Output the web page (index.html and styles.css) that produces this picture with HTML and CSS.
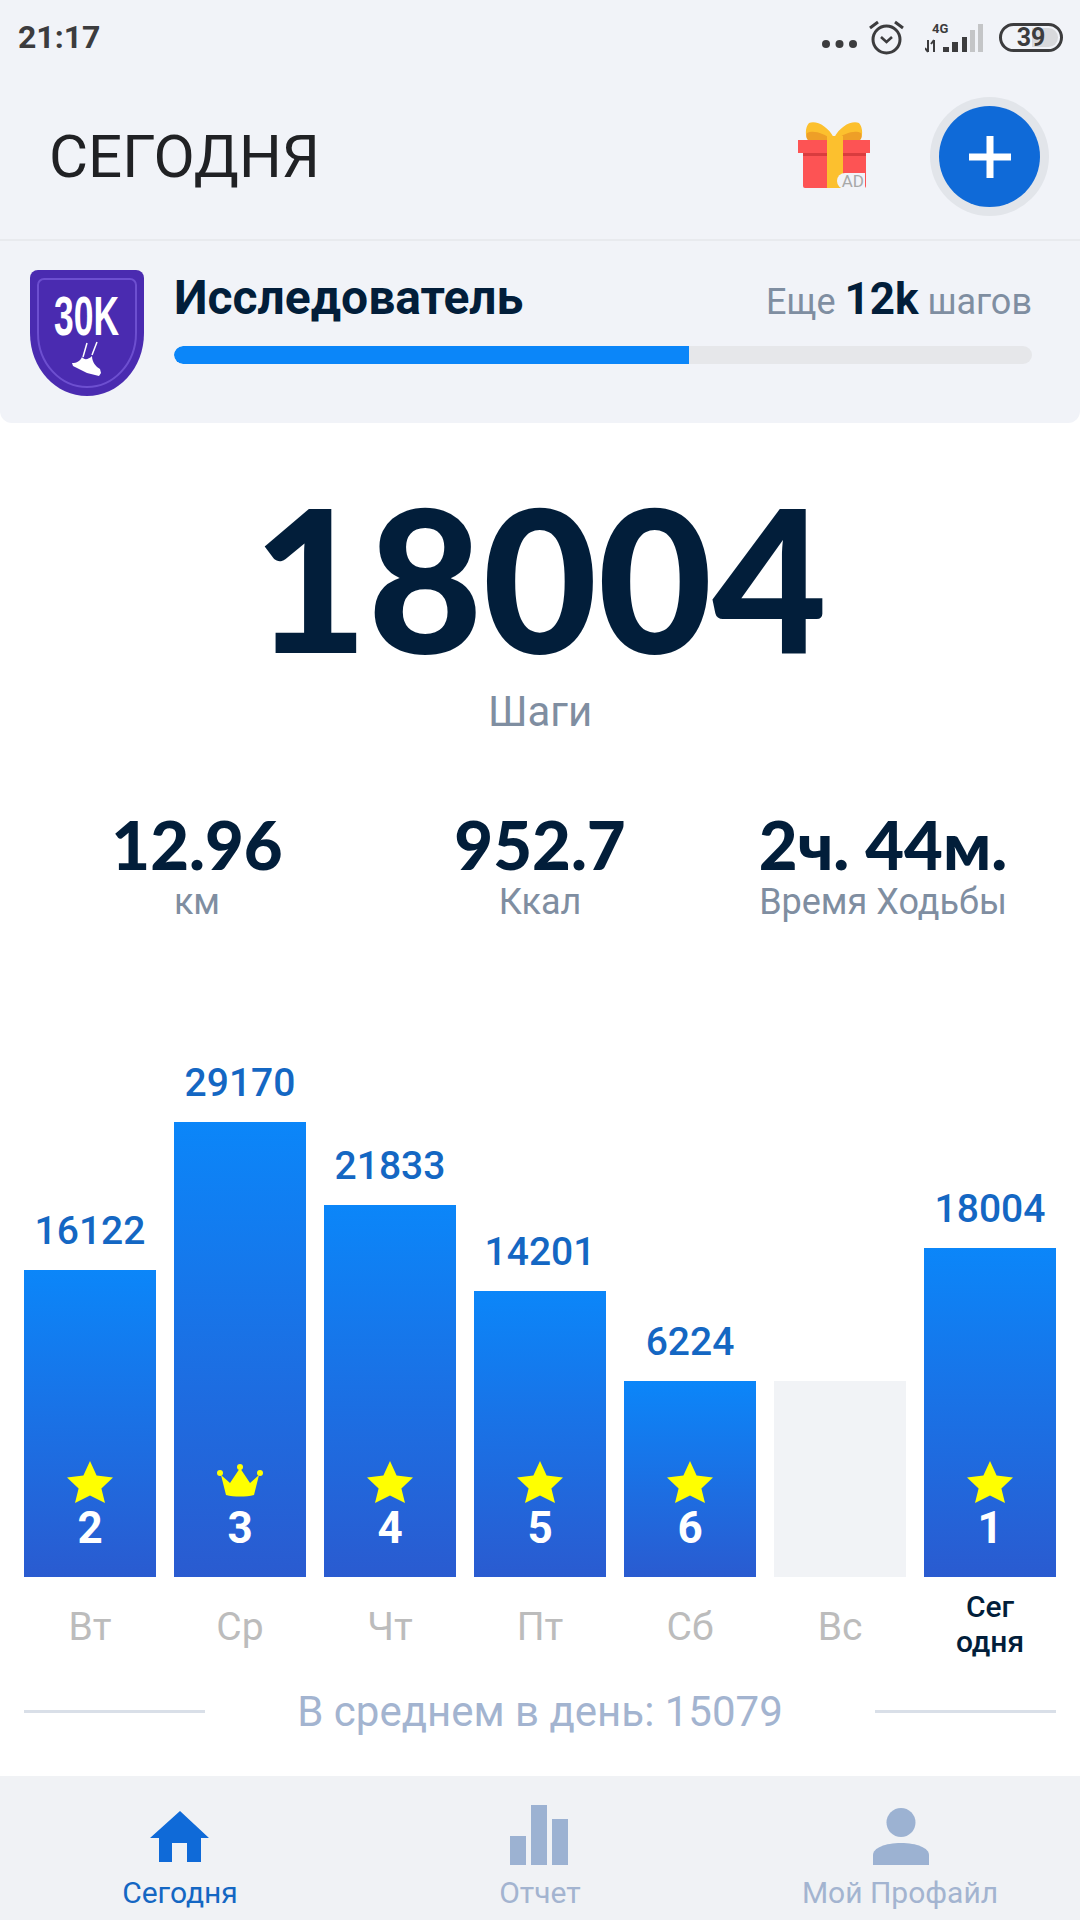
FILE: index.html
```html
<!DOCTYPE html>
<html lang="ru">
<head>
    <meta charset="UTF-8">
    <meta name="viewport" content="width=device-width, initial-scale=1.0">
    <title>Сегодня</title>
    <link rel="stylesheet" href="styles.css">
</head>
<body>
    <div class="screen">
        <!-- Status bar -->
        <div class="status">
            <span class="time">21:17</span>
            <div class="status-icons">
                <svg class="dots" width="35" height="10" viewBox="0 0 35 10"><circle cx="4" cy="5" r="4"/><circle cx="17.5" cy="5" r="4"/><circle cx="31" cy="5" r="4"/></svg>
                <svg class="alarm" width="35" height="35" viewBox="0 0 35 35">
                    <circle cx="17.5" cy="19.5" r="13.5" fill="none" stroke="#3c3c3e" stroke-width="3"/>
                    <path d="M12 17l5.5 5 5.5-5" fill="none" stroke="#3c3c3e" stroke-width="2.6"/>
                    <path d="M1 8l8-6M34 8l-8-6" stroke="#3c3c3e" stroke-width="3" fill="none"/>
                </svg>
                <svg class="signal" width="60" height="32" viewBox="0 0 60 32">
                    <text x="7" y="12" class="net-label">4G</text>
                    <path d="M3 19v12M0 27l3 4M9 31V19M6 23l3-4" stroke="#3c3c3e" stroke-width="2" fill="none"/>
                    <rect x="18" y="26" width="6" height="5" fill="#3c3c3e"/>
                    <rect x="27" y="21" width="6" height="10" fill="#3c3c3e"/>
                    <rect x="37" y="16" width="5" height="15" fill="#3c3c3e"/>
                    <rect x="45" y="9" width="5" height="22" fill="#c4c5c7"/>
                    <rect x="53" y="3" width="5" height="28" fill="#c4c5c7"/>
                </svg>
                <div class="battery"><div class="battery-fill"></div><span>39</span></div>
            </div>
        </div>

        <!-- Title row -->
        <header class="header">
            <h1>СЕГОДНЯ</h1>
            <div class="gift">
                <svg width="72" height="66" viewBox="0 0 72 66">
                    <path d="M36 16C30 4 18-2 11 1 7 6 7 13 10 18h26zM36 16C42 4 54-2 61 1c4 5 4 12 1 17H36z" fill="#fcc02e"/>
                    <path d="M34 18C26 11 15 8 9 11c-1 3-1 5 1 7zM38 18c8-7 19-10 25-7 1 3 1 5-1 7z" fill="#ee9f27"/>
                    <rect x="5" y="31" width="63" height="35" rx="2" fill="#fd5354"/>
                    <rect x="0" y="18" width="72" height="13" fill="#fd5354"/>
                    <rect x="5" y="31" width="63" height="3" fill="#d93c3e"/>
                    <rect x="29" y="14" width="16" height="52" fill="#fcc02e"/>
                </svg>
                <span class="ad">AD</span>
            </div>
            <div class="add-ring">
                <div class="add-btn">
                    <svg width="42" height="42" viewBox="0 0 42 42"><path d="M21 0v42M0 21h42" stroke="#fff" stroke-width="7" fill="none"/></svg>
                </div>
            </div>
        </header>

        <!-- Level progress -->
        <section class="level">
            <svg class="badge" width="114" height="126" viewBox="0 0 114 126">
                <path d="M8 0h98a8 8 0 0 1 8 8v55c0 36-26 63-57 63S0 99 0 63V8a8 8 0 0 1 8-8z" fill="#4a2bb0"/>
                <path d="M14 9h86a6 6 0 0 1 6 6v48c0 31-23 54-49 54S8 94 8 63V15a6 6 0 0 1 6-6z" fill="none" stroke="#6d4fd0" stroke-width="2"/>
                <text x="24" y="65" textLength="65" lengthAdjust="spacingAndGlyphs" class="badge-text">30K</text>
                <path d="M57 73l-4 14M67 72l-5 13" stroke="#fff" stroke-width="1.5" fill="none"/>
                <path d="M52 87C54 90 58 90 62 86 62 92 66 97 70 99L71 103 69 106 57 103 43 96 42 93C47 93 50 91 52 87z" fill="#fff"/>
            </svg>
            <div class="level-body">
                <div class="level-top">
                    <span class="level-name">Исследователь</span>
                    <span class="level-left">Еще <b>12k</b> шагов</span>
                </div>
                <div class="progress"><div class="progress-fill" style="width: 60%"></div></div>
            </div>
        </section>

        <!-- Today's totals -->
        <main class="today">
            <div class="steps">18004</div>
            <div class="steps-label">Шаги</div>

            <div class="stats">
                <div class="stat"><div class="stat-value">12.96</div><div class="stat-label">км</div></div>
                <div class="stat"><div class="stat-value">952.7</div><div class="stat-label">Ккал</div></div>
                <div class="stat"><div class="stat-value">2ч. 44м.</div><div class="stat-label">Время Ходьбы</div></div>
            </div>

            <!-- Weekly chart -->
            <div class="chart">
                <div class="col">
                    <div class="col-value">16122</div>
                    <div class="bar" style="height: 307px">
                        <svg class="star" width="46" height="42" viewBox="0 0 46 42"><path d="M23 0l6.6 14.4L46 16.6 34.4 27.6 38 42 23 34.6 8 42l3.6-14.4L0 16.6l16.4-2.2z"/></svg>
                        <span class="streak">2</span>
                    </div>
                    <div class="day">Вт</div>
                </div>
                <div class="col">
                    <div class="col-value">29170</div>
                    <div class="bar" style="height: 455px">
                        <svg class="star" width="46" height="42" viewBox="0 0 46 42"><circle cx="3" cy="12" r="3"/><circle cx="23" cy="6" r="3"/><circle cx="43" cy="12" r="3"/><path d="M4 14l9 8 10-15 10 15 9-8-5 20c-8 2-20 2-28 0z"/></svg>
                        <span class="streak">3</span>
                    </div>
                    <div class="day">Ср</div>
                </div>
                <div class="col">
                    <div class="col-value">21833</div>
                    <div class="bar" style="height: 372px">
                        <svg class="star" width="46" height="42" viewBox="0 0 46 42"><path d="M23 0l6.6 14.4L46 16.6 34.4 27.6 38 42 23 34.6 8 42l3.6-14.4L0 16.6l16.4-2.2z"/></svg>
                        <span class="streak">4</span>
                    </div>
                    <div class="day">Чт</div>
                </div>
                <div class="col">
                    <div class="col-value">14201</div>
                    <div class="bar" style="height: 286px">
                        <svg class="star" width="46" height="42" viewBox="0 0 46 42"><path d="M23 0l6.6 14.4L46 16.6 34.4 27.6 38 42 23 34.6 8 42l3.6-14.4L0 16.6l16.4-2.2z"/></svg>
                        <span class="streak">5</span>
                    </div>
                    <div class="day">Пт</div>
                </div>
                <div class="col">
                    <div class="col-value">6224</div>
                    <div class="bar" style="height: 196px">
                        <svg class="star" width="46" height="42" viewBox="0 0 46 42"><path d="M23 0l6.6 14.4L46 16.6 34.4 27.6 38 42 23 34.6 8 42l3.6-14.4L0 16.6l16.4-2.2z"/></svg>
                        <span class="streak">6</span>
                    </div>
                    <div class="day">Сб</div>
                </div>
                <div class="col">
                    <div class="bar bar-empty" style="height: 196px"></div>
                    <div class="day">Вс</div>
                </div>
                <div class="col">
                    <div class="col-value">18004</div>
                    <div class="bar" style="height: 329px">
                        <svg class="star" width="46" height="42" viewBox="0 0 46 42"><path d="M23 0l6.6 14.4L46 16.6 34.4 27.6 38 42 23 34.6 8 42l3.6-14.4L0 16.6l16.4-2.2z"/></svg>
                        <span class="streak">1</span>
                    </div>
                    <div class="day day-now">Сег<br>одня</div>
                </div>
            </div>

            <div class="average">
                <span class="rule"></span>
                <span class="average-text">В среднем в день: 15079</span>
                <span class="rule"></span>
            </div>
        </main>

        <!-- Bottom tabs -->
        <nav class="tabs">
            <div class="tab tab-active">
                <svg width="60" height="60" viewBox="0 0 60 60"><path d="M30 6L59 33H51V57H37V38H22V57H9V33H0z" fill="#0f6ad8"/></svg>
                <span>Сегодня</span>
            </div>
            <div class="tab">
                <svg width="60" height="60" viewBox="0 0 60 60" fill="#9cb2d2"><rect x="0" y="31" width="16" height="29"/><rect x="21" y="0" width="16" height="60"/><rect x="42" y="14" width="16" height="46"/></svg>
                <span>Отчет</span>
            </div>
            <div class="tab">
                <svg width="60" height="60" viewBox="0 0 60 60" fill="#9cb2d2"><ellipse cx="31" cy="17.5" rx="14.5" ry="14.5"/><path d="M3 60V50C3 43 15 38 31 38s28 5 28 12v10z"/></svg>
                <span>Мой Профайл</span>
            </div>
        </nav>
    </div>
</body>
</html>
```

FILE: styles.css
```css
* {
    box-sizing: border-box;
}

body {
    margin: 0;
    font-family: Roboto, "Noto Sans", sans-serif;
    background-color: #fff;
}

.screen {
    width: 1080px;
    height: 1920px;
    display: flex;
    flex-direction: column;
    overflow: hidden;
}

/* Status bar */
.status {
    height: 78px;
    padding: 0 17px 4px 18px;
    display: flex;
    align-items: center;
    justify-content: space-between;
    background-color: #f1f3f8;
}

.time {
    font-size: 32px;
    font-weight: 700;
    color: #3c3c3e;
}

.status-icons {
    display: flex;
    align-items: center;
}

.dots {
    fill: #3c3c3e;
    margin: 14px 12px 0 0;
}

.alarm {
    margin-right: 21px;
}

.signal {
    margin-right: 14px;
}

.net-label {
    font-size: 13px;
    font-weight: 700;
    fill: #3c3c3e;
}

.battery {
    position: relative;
    width: 64px;
    height: 29px;
    border: 3px solid #3c3c3e;
    border-radius: 15px;
    display: flex;
    align-items: center;
    justify-content: center;
    overflow: hidden;
}

.battery span {
    position: relative;
    font-size: 25px;
    font-weight: 700;
    color: #3c3c3e;
}

.battery-fill {
    position: absolute;
    top: 2px;
    right: 2px;
    bottom: 2px;
    width: 26px;
    border-radius: 0 10px 10px 0;
    background-color: #d8d9dc;
}

/* Title row */
.header {
    height: 163px;
    padding: 0 31px 4px 49px;
    display: flex;
    align-items: center;
    background-color: #f1f3f8;
    border-bottom: 2px solid #e8eaee;
}

.header h1 {
    flex: 1;
    margin: 0;
    font-size: 60px;
    font-weight: 400;
    color: #202124;
}

.gift {
    position: relative;
    width: 72px;
    height: 66px;
    margin: 0 60px 4px 0;
}

.ad {
    position: absolute;
    right: 5px;
    bottom: -1px;
    padding: 0 1px 0 5px;
    border-radius: 9px 0 0 9px;
    font-size: 17px;
    line-height: 16px;
    color: #a8a8a8;
    background-color: #f1f3f8;
}

.add-ring {
    width: 119px;
    height: 119px;
    border-radius: 50%;
    background-color: #e2e5ea;
    display: flex;
    align-items: center;
    justify-content: center;
}

.add-btn {
    width: 101px;
    height: 101px;
    border-radius: 50%;
    background-color: #0f6ad8;
    display: flex;
    align-items: center;
    justify-content: center;
}

/* Level progress */
.level {
    height: 182px;
    padding: 29px 48px 0 30px;
    display: flex;
    align-items: flex-start;
    background-color: #f1f3f8;
    border-radius: 0 0 12px 12px;
}

.badge {
    flex-shrink: 0;
    margin-right: 30px;
}

.badge-text {
    font-family: "Liberation Sans", sans-serif;
    font-size: 56px;
    font-weight: 700;
    fill: #fff;
}

.level-body {
    flex: 1;
}

.level-top {
    height: 76px;
    display: flex;
    align-items: baseline;
    justify-content: space-between;
}

.level-name {
    font-size: 48px;
    font-weight: 700;
    line-height: 56px;
    color: #021e3a;
}

.level-left {
    font-size: 36px;
    color: #7f8ea1;
}

.level-left b {
    font-size: 44px;
    color: #021e3a;
}

.progress {
    height: 18px;
    border-radius: 9px;
    background-color: #e6e7ea;
    overflow: hidden;
}

.progress-fill {
    height: 100%;
    border-radius: 9px 0 0 9px;
    background-color: #0b86f9;
}

/* Today's totals */
.today {
    flex: 1;
    display: flex;
    flex-direction: column;
    background-color: #fff;
}

.steps {
    margin-top: 59px;
    font-family: Lato, sans-serif;
    font-size: 198px;
    font-weight: 900;
    line-height: 190px;
    text-align: center;
    color: #021e3a;
}

.steps-label {
    margin-top: 17px;
    font-size: 42px;
    line-height: 46px;
    text-align: center;
    color: #7f8ea1;
}

.stats {
    margin-top: 71px;
    display: grid;
    grid-template-columns: repeat(3, 343px);
    justify-content: center;
    justify-items: center;
}

.stat {
    text-align: center;
    white-space: nowrap;
}

.stat-value {
    font-family: Lato, sans-serif;
    font-size: 67px;
    font-weight: 900;
    line-height: 76px;
    color: #021e3a;
}

.stat-label {
    font-size: 36px;
    line-height: 40px;
    color: #7f8ea1;
}

/* Weekly chart */
.chart {
    height: 751px;
    margin-top: 2px;
    padding: 0 24px;
    display: grid;
    grid-template-columns: repeat(7, 132px);
    justify-content: space-between;
    align-items: end;
}

.col {
    display: flex;
    flex-direction: column;
    align-items: stretch;
}

.col-value {
    height: 64px;
    padding-bottom: 14px;
    font-size: 39px;
    font-weight: 500;
    line-height: 50px;
    text-align: center;
    color: #1467c3;
}

.bar {
    display: flex;
    flex-direction: column;
    align-items: center;
    justify-content: flex-end;
    padding-bottom: 24px;
    background: linear-gradient(to bottom, #0b86f9, #2a5bd0 100%);
}

.bar-empty {
    background: #f1f3f6;
}

.star {
    fill: #ffff00;
}

.streak {
    font-size: 44px;
    font-weight: 700;
    line-height: 50px;
    color: #fff;
}

.day {
    height: 98px;
    padding-top: 28px;
    font-size: 39px;
    line-height: 44px;
    text-align: center;
    color: #bcbcbc;
}

.day-now {
    padding-top: 12px;
    font-size: 30px;
    font-weight: 500;
    line-height: 35px;
    color: #021e3a;
}

.average {
    padding: 0 24px;
    height: 60px;
    margin-top: 6px;
    display: flex;
    align-items: center;
    justify-content: space-between;
}

.rule {
    width: 181px;
    height: 3px;
    background-color: #d9dfe8;
}

.average-text {
    font-size: 42px;
    color: #a3b4d0;
}

/* Bottom tabs */
.tabs {
    height: 144px;
    display: grid;
    grid-template-columns: repeat(3, 360px);
    background-color: #f0f2f5;
}

.tab {
    padding-top: 29px;
    display: flex;
    flex-direction: column;
    align-items: center;
    font-size: 30px;
    color: #a3b4d0;
}

.tab span {
    margin-top: 11px;
    line-height: 34px;
}

.tab-active {
    color: #1467c3;
}
```
